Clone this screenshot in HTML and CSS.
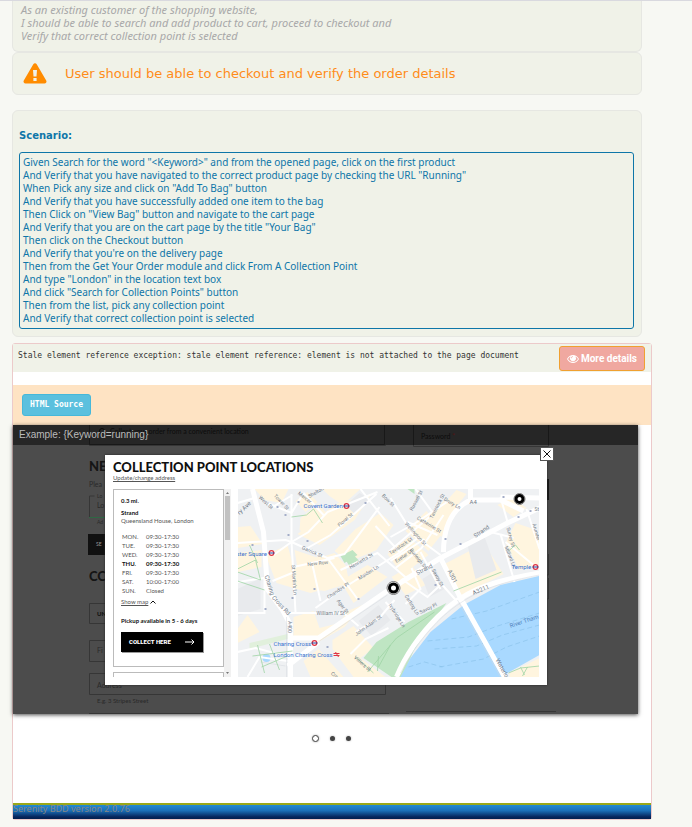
FILE: index.html
```html
<!DOCTYPE html>
<html lang="en">
<head>
<meta charset="utf-8">
<title>Serenity BDD report</title>
<link rel="stylesheet" href="styles.css">
</head>
<body>
<main class="report">
  <section class="card narrative">
    <p>As an existing customer of the shopping website,<br>I should be able to search and add product to cart, proceed to checkout and<br>Verify that correct collection point is selected</p>
  </section>

  <section class="card story">
    <svg class="story-icon" viewBox="0 0 24 21" aria-hidden="true">
      <path fill="#ff8c00" fill-rule="evenodd" d="M10.300 1.200a2 2 0 0 1 3.400 0l9.500 16.400a2 2 0 0 1-1.700 3H2.500a2 2 0 0 1-1.700-3zM10 7l.5 6.500h3L14 7zM10.400 15v3h3.200v-3z"/>
    </svg>
    <h1>User should be able to checkout and verify the order details</h1>
  </section>

  <section class="card scenario">
    <h2>Scenario:</h2>
    <div class="steps">
      <div>Given Search for the word "&lt;Keyword&gt;" and from the opened page, click on the first product</div>
      <div>And Verify that you have navigated to the correct product page by checking the URL "Running"</div>
      <div>When Pick any size and click on "Add To Bag" button</div>
      <div>And Verify that you have successfully added one item to the bag</div>
      <div>Then Click on "View Bag" button and navigate to the cart page</div>
      <div>And Verify that you are on the cart page by the title "Your Bag"</div>
      <div>Then click on the Checkout button</div>
      <div>And Verify that you're on the delivery page</div>
      <div>Then from the Get Your Order module and click From A Collection Point</div>
      <div>And type "London" in the location text box</div>
      <div>And click "Search for Collection Points" button</div>
      <div>Then from the list, pick any collection point</div>
      <div>And Verify that correct collection point is selected</div>
    </div>
  </section>

  <section class="result">
    <header class="error">
      <p>Stale element reference exception: stale element reference: element is not attached to the page document</p>
      <button type="button" class="details">
        <svg viewBox="0 0 12 8" aria-hidden="true"><path fill="#fff" fill-rule="evenodd" d="M0 4C1.500 1.300 3.600 0 6 0s4.500 1.300 6 4C10.500 6.700 8.400 8 6 8S1.500 6.700 0 4zM1 4c1 1.700 2.900 3 5 3s4-1.300 5-3C10.400 2.900 9.500 2 8.500 1.500a3 3 0 1 1-5 0C2.500 2 1.600 2.900 1 4zM6 1.300C4.900 1.300 4.200 2 4.200 3.200h.7C4.900 2.500 5.300 2 6 2z"/></svg>
        More details
      </button>
    </header>
    <div class="toolbar"><button type="button" class="source">HTML Source</button></div>

    <div class="stage">
      <svg class="backdrop" viewBox="0 0 625 289" aria-hidden="true">
        <rect width="625" height="289" fill="#4c4c4c"/>
        <g fill="none" stroke="#363636">
          <path d="M76.500 0v20.500h296V0M400.500 0v21.500h135V0M76.500 71h5M76.500 71v21M76.500 178.500v20h20M76.500 178.500h20M76.500 215.500h20M76.500 215.500v21h20M76.500 248.500v21h296v-10M76.500 248.500h20M393 286.500h150M76 288.500h300M535.500 54v21M535.500 129v21h-3M535.500 153v21h-3"/>
        </g>
        <path stroke="#2f6844" d="M76 92.500h20"/>
        <path fill="#111" d="M75 109h21v21H75z"/>
        <path fill="#181818" d="M534 54h2v21h-2z"/>
        <g font-family="Lato, sans-serif" font-size="7" fill="#292929">
          <text x="76" y="46" font-size="13" font-weight="900" fill="#151515">NE</text>
          <text x="76" y="156" font-size="13" font-weight="900" fill="#151515">CC</text>
          <text x="76" y="62">Plea</text><text x="84" y="73" font-size="5">Lo</text><text x="84" y="83">Lo</text>
          <text x="84" y="99" font-size="5">Ad</text><text x="83" y="121" font-size="5" fill="#999">SE</text>
          <text x="84" y="191" font-size="6" font-weight="900" fill="#111">UN</text><text x="84" y="228">Fi</text><text x="84" y="263">Address</text>
          <text x="84" y="278" font-size="6">E.g. 3 Stripes Street</text>
        </g>
      </svg>

      <div class="caption">
        <svg viewBox="0 0 625 20" aria-hidden="true">
          <rect width="625" height="20" fill="#262626"/>
          <path fill="none" stroke="#181818" d="M76.500 0v19.500h295V0M400.500 0v20M535.500 0v20"/>
          <circle cx="89" cy="6" r="2.500" fill="none" stroke="#0b0b0b"/>
          <g font-family="Lato, sans-serif" font-size="7" fill="#0c0c0c"><text x="97" y="9">Collect your order from a convenient location</text><text x="408" y="14">Password <tspan fill="#501414">*</tspan></text></g>
        </svg>
        <span>Example: {Keyword=running}</span>
      </div>

      <section class="modal">
        <button type="button" class="close" aria-label="Close"><svg viewBox="0 0 12 12"><path d="M2.500 2.500l7 7M9.500 2.500l-7 7" stroke="#111" fill="none"/></svg></button>
        <h3>COLLECTION POINT LOCATIONS</h3>
        <a class="address" href="#">Update/change address</a>
        <div class="columns">
          <div class="places">
            <article class="place">
              <b>0.3 mi.</b>
              <b class="name">Strand</b>
              <p>Queensland House, London</p>
              <table>
                <tr><th>MON.</th><td>09:30-17:30</td></tr>
                <tr><th>TUE.</th><td>09:30-17:30</td></tr>
                <tr><th>WED.</th><td>09:30-17:30</td></tr>
                <tr class="today"><th>THU.</th><td>09:30-17:30</td></tr>
                <tr><th>FRI.</th><td>09:30-17:30</td></tr>
                <tr><th>SAT.</th><td>10:00-17:00</td></tr>
                <tr><th>SUN.</th><td>Closed</td></tr>
              </table>
              <div class="showmap"><a href="#">Show map</a><svg viewBox="0 0 6 4" aria-hidden="true"><path d="M.5 3.500L3 1l2.500 2.500" fill="none" stroke="#111"/></svg></div>
              <b class="pickup">Pickup available in 5 - 6 days</b>
              <button type="button" class="collect">COLLECT HERE<svg viewBox="0 0 10 6" aria-hidden="true"><path d="M0 3h9M6.500.5L9 3 6.500 5.500" fill="none" stroke="#fff"/></svg></button>
            </article>
            <article class="place next"></article>
          </div>
          <svg class="scroll" viewBox="0 0 7 188" aria-hidden="true"><path fill="#f1f1f1" d="M0 0h7v188H0z"/><path fill="#c1c1c1" d="M1 7h5v44H1z"/><path fill="#777" d="M2 5l1.500-2L5 5zM2 183l1.500 2L5 183z"/></svg>
          <svg class="map" viewBox="0 0 302 188" preserveAspectRatio="xMidYMid slice" role="img" aria-label="Map of collection points">
            <rect width="302" height="188" fill="#eff1f3"/>
            <g fill="#fff5df">
              <path d="M17 0h34l-7 14-17-3zM0 38l13-1 12 18-25 4zM63 29l18-14 13 15-18 18-14-7zM85 0h38l-18 16-13-9zM58 12l12-9 10 10-12 10zM28 66l22-10 6 22 14-3 14-10 10 10 4 22-25 7-34-10zM57 61l24 8 16-5 11 12 4 18-25 8-24-4zM60 45l38-30 36-10-17 26-35 25zM97 62l21-22 25-16 13 12-17 25-28 12zM103 92l27-16 20 12-34 26zM56 128l20-6 6 17 20-5 8-12 15-6-18 22-26 15-25-6zM95 151l21-14 20 22-13 10 25 19h-32l-21-28zM66 172l15-12 25 28H73zM0 64l24-3v17l-24 5zM0 140l10-14 12 17-22 11z"/>
              <path d="M150 65l21-17 20 18-26 20zM168 42l21-20 17 21-15 19zM192 26l14-14 14 5-16 31zM207 75l25-13 16-5 18 28-43 22zM268 54l10-20 18 6 6 11v24l-20 6zM260 16l14-8 15 11-13 9zM154 88l20-12 14 20-20 10zM272 184l30-15v19h-30zM207 14l12-13 10 4-9 11z"/>
            </g>
            <path fill="#e8eaed" d="M229 52l17-7 13 36-21 9zM108 16l14-12 12 7-17 14zM121 132l20-16 12 15-19 16zM185 90l14-9 8 19-15 8zM0 100l23-11v31l-23 7z"/>
            <g fill="#bfe5c3"><path d="M126 169l13-16 32-20 38-19-18 25-15 23-11 26h-11zM103 67l12-6 5 5-13 8zM108 71l9-4 4 4-9 6zM170 0h7v5z"/><path d="M12 154l38-9v5l-38 10z" fill="#e1f0dc"/></g>
            <path fill="#a9d9ff" d="M163 188l10-19 20-26 33-27 37-20 39-9v79l-32 18-4 4z"/>
            <circle cx="29" cy="169" r="4" fill="#a9d9ff"/>
            <g fill="none" stroke="#87bfe8" stroke-width=".6" stroke-dasharray="5 3"><path d="M171 178l16-5 18 5M190 152l41-4 29-11 42-13M197 160l42-3 26-11 37-10M214 130l35-8 53-19M202 178l44-8 23-12 33-11"/></g>
            <g fill="none" stroke="#fff" stroke-width="2">
              <path d="M0 54l48-3 6 2 17-10 19-20 30-12 20-8M54 5v48l4 70M54 53l36 16 30 41M70 59l23-13 46-41M75 76l8 36M78 119l28-20 57-36 17-14M103 81l37-17 30 26M48 124h58l15 13M0 14l17-5M27 13l27 11 12-20M66 4l20 22M35 18l20-12M0 124h27V89L0 93M0 163l18-4 38 10M10 188l12-20 28 4M36 66l18-13M56 78l41-9M35 92l22-9M90 69l17-4 35-47M123 0l29 37M138 37l25 27M153 9l23 37 27 20M153 48l25-14 33-22M151 63l42-36M158 79l26-20 22-33M170 33l30 13M187 50l-34 22M164 90l26 18 14-13 16 18M174 79l9 21-15 15M183 63l20 37M178 0l16 22M148 113l19 20M118 143l24-14 15-18M113 165l15-15 23-11M270 33l-7-25M263 45l14 48M268 53l28 23M289 20l13 40M253 43l23 6"/>
            </g>
            <g fill="none" stroke="#fff" stroke-width="4" stroke-linejoin="round">
              <path d="M15 0l11 43 3 43v13l16 22 8 15v13h28l70-48 52-32 50-26 17-9 32-15M206 63c0-25 8-43 27-52h30l23 11M233 11V0M263 8l39 1" stroke-width="5"/>
              <path d="M159 188c10-24 23-42 41-60 24-24 48-35 102-44M203 69l20 40 44 79M53 149v39M50 177l31-24" stroke-width="5"/>
            </g>
            <g fill="none" stroke="#d5d9df" stroke-width=".5"><path d="M163 184c12-23 25-40 43-57 22-19 45-32 96-41M220 111l43 77M23 173l25 4M82 152l68-46M49 128v60"/></g>
            <g fill="none" stroke="#9ed4a4" stroke-width=".8"><path d="M0 80l18-9 5 20-23-8M12 56l8 18M0 92l27 9M54 28l15-2 7-6 9 14M20 156l7 28M15 167l40-5M32 155l10 26M24 178l26-11M130 183l29-34 38-26M141 167l-1 15M118 168l18 16M216 102l48-19M271 62l7-6 4 5M271 184l12-5 19-2M283 178l4 8M290 178l-5 9M153 156l-12 22"/></g>
            <g font-family="Roboto, sans-serif" font-size="5" fill="#737c88">
              <text x="2" y="26" font-size="6" transform="rotate(-43 2 26)">ry Ave</text><text x="21" y="9" transform="rotate(42 21 9)">West St</text><text x="36" y="7" transform="rotate(47 36 7)">Tower St</text><text x="60" y="5" transform="rotate(38 60 5)">Mercer</text><text x="72" y="9" transform="rotate(-30 72 9)">Shelton</text><text x="102" y="38" transform="rotate(-41 102 38)">Floral St</text><text x="144" y="7" transform="rotate(45 144 7)">Bow St</text><text x="64" y="60" transform="rotate(23 64 60)">Garrick St</text><text x="70" y="77" transform="rotate(-6 70 77)">New Row</text><text x="54" y="76" transform="rotate(86 54 76)">St Martin's Ln</text><text x="113" y="80" transform="rotate(-30 113 80)">Henrietta St</text><text x="122" y="91" transform="rotate(-32 122 91)">Maiden Ln</text><text x="91" y="110" transform="rotate(-34 91 110)">Chandos Pl</text><text x="99" y="112" transform="rotate(53 99 112)">Agar St</text><text x="79" y="126">William IV St</text><text x="27" y="87" font-size="6" transform="rotate(72 27 87)">Charing</text><text x="34" y="109" font-size="6" transform="rotate(47 34 109)">Cross Rd</text><text x="50" y="132" transform="rotate(90 50 132)">A400</text><text x="119" y="147" transform="rotate(-36 119 147)">John Adam St</text><text x="116" y="169" transform="rotate(41 116 169)">Villiers St</text><text x="93" y="185" transform="rotate(40 93 185)">Cra</text>
              <text x="153" y="66" transform="rotate(-34 153 66)">Tavistock St</text><text x="167" y="35" transform="rotate(48 167 35)">Wellington St</text><text x="179" y="30" transform="rotate(31 179 30)">Catherine St</text><text x="175" y="22" transform="rotate(-62 175 22)">Russell St</text><text x="195" y="30" transform="rotate(-63 195 30)">Tavistock St</text><text x="206" y="11" transform="rotate(31 206 11)">Drury Ln</text><text x="159" y="74" transform="rotate(-34 159 74)">Exeter St</text><text x="172" y="61" transform="rotate(52 172 61)">Burleigh St</text><text x="232" y="15" font-size="6">A4</text><text x="238" y="49" font-size="6" transform="rotate(-35 238 49)">Strand</text><text x="180" y="86" font-size="6" transform="rotate(-27 180 86)">Strand</text><text x="297" y="22">St</text><text x="269" y="39" transform="rotate(75 269 39)">Surrey St</text><text x="295" y="35" transform="rotate(75 295 35)">Arundel</text><text x="267" y="58" transform="rotate(68 267 58)">Milford Ln</text><text x="210" y="82" font-size="6" transform="rotate(63 210 82)">A301</text><text x="236" y="106" font-size="6" transform="rotate(-23 236 106)">A3211</text><text x="194" y="81" transform="rotate(61 194 81)">Savoy St</text><text x="183" y="125" transform="rotate(-26 183 125)">Savoy Pl</text><text x="167" y="107" transform="rotate(58 167 107)">Carting Ln</text><text x="151" y="116" transform="rotate(58 151 116)">Ivybridge Ln</text><text x="258" y="171" font-size="6" transform="rotate(61 258 171)">Waterlo</text>
            </g>
            <g font-family="Roboto, sans-serif" font-size="6" fill="#3972cf">
              <text x="66" y="19">Covent Garden</text><text x="-1" y="67">ster Square</text><text x="36" y="157">Charing Cross</text><text x="36" y="168">London Charing Cross</text><text x="274" y="80">Temple</text><text x="273" y="139" transform="rotate(-19 273 139)" fill="#5182bd">River Tham</text>
            </g>
            <g fill="#fff" stroke="#df3545" stroke-width="1.200"><circle cx="109" cy="17" r="2.300"/><circle cx="34" cy="64" r="2.300"/><circle cx="77" cy="154" r="2.300"/><circle cx="298" cy="78" r="2.300"/></g>
            <g stroke="#243c96"><path d="M106 17h6M31 64h6M74 154h6M295 78h6"/></g><path stroke="#df3545" d="M96 164.500h6M96 166.500h6M98 163l3 5"/>
            <g fill="#fff" stroke="#000" stroke-width="3"><circle cx="156" cy="99" r="6.500" stroke="#777" stroke-width="1"/><circle cx="156" cy="99" r="4"/><circle cx="282" cy="10" r="5.500" stroke="#777" stroke-width="1"/><circle cx="282" cy="10" r="3.500"/></g>
            <g fill="#a3adc8"><path d="M60 12h2v2h-2zM39 17h2v2h-2zM47 25h2v2h-2zM69 51h2v2h-2zM50 45h2v2h-2zM14 55h2v2h-2zM127 13h2v2h-2zM54 108h2v2h-2zM76 99h2v2h-2zM120 109h2v2h-2zM27 119h2v2h-2zM89 157h2v2h-2zM207 49h2v2h-2zM222 54h2v2h-2zM265 7h2v2h-2zM280 27h2v2h-2zM292 21h2v2h-2zM197 95h2v2h-2z"/></g>
          </svg>
        </div>
      </section>
    </div>

    <nav class="dots" aria-label="Screenshots">
      <button type="button" class="current" aria-label="Screenshot 1"></button>
      <button type="button" aria-label="Screenshot 2"></button>
      <button type="button" aria-label="Screenshot 3"></button>
    </nav>
    <footer>Serenity BDD version 2.0.76</footer>
  </section>
</main>
</body>
</html>
```

FILE: styles.css
```css
* { box-sizing: border-box; }
body {
  margin: 0;
  background: #f7f8f3;
  font-family: "Noto Sans", Verdana, sans-serif;
  font-size: 10px;
  line-height: 13px;
}
p, h1, h2, h3 { margin: 0; }
h1, h2 { font-family: "DejaVu Sans", Verdana, sans-serif; }
button { font: inherit; margin: 0; cursor: pointer; }
a { color: inherit; }

.report { border-top: 1px solid #d9d9df; padding: 0 40px 8px 12px; }
.card {
  margin-right: 10px;
  background: #f0f2e8;
  border: 1px solid #e6e7e2;
  border-radius: 6px;
}
.narrative {
  border-top: 0;
  border-radius: 0 0 6px 6px;
  padding: 2px 8px 9px;
  color: #a8a8a8;
  font-size: 11px;
  font-style: italic;
}
.story {
  display: flex;
  align-items: center;
  gap: 18px;
  height: 43px;
  padding: 0 10px;
}
.story-icon { width: 24px; height: 21px; }
.story h1 { font-size: 13px; font-weight: 400; line-height: 16px; color: #ff8c1a; }

.scenario { margin-top: 15px; padding: 18px 7px 7px 6px; color: #0e76a8; }
.scenario h2 { font-size: 10px; line-height: 13px; margin-bottom: 10px; }
.steps { border: 1px solid #0e76a8; border-radius: 3px; padding: 3px; }

.result { margin-top: 6px; background: #fff; border: 1px solid #eccaca; border-radius: 3px; }
.error {
  display: flex;
  align-items: flex-start;
  justify-content: space-between;
  background: #f0f2e8;
  padding: 2px 6px 1px 5px;
}
.error p { font: 8px/13px "DejaVu Sans Mono", monospace; color: #333; padding-top: 3px; }
.details {
  display: flex;
  align-items: center;
  gap: 2px;
  height: 25px;
  padding: 0 7px;
  border: 1px solid #f0a030;
  border-radius: 3px;
  background: #f0a8a0;
  color: #fff;
  font: 700 10px/14px Roboto, Arial, sans-serif;
  white-space: nowrap;
}
.details svg { width: 12px; height: 8px; }
.toolbar { margin-top: 13px; padding: 9px; background: #fee3c3; }
.source {
  display: block;
  height: 22px;
  padding: 0 7px;
  border: 1px solid #46b8da;
  border-radius: 3px;
  background: #5bc0de;
  color: #fff;
  font: 700 8px/12px "DejaVu Sans Mono", monospace;
}

.stage { position: relative; margin-right: 13px; box-shadow: 0 1px 4px rgba(0, 0, 0, .7); }
.backdrop, .caption svg { display: block; width: 100%; }
.caption { position: absolute; top: 0; left: 0; right: 0; color: #bbb; font: 10px/20px "Liberation Sans", Arial, sans-serif; }
.caption span { position: absolute; left: 6px; top: 0; }

.modal {
  position: absolute;
  left: 92px;
  right: 91px;
  top: 30px;
  padding: 5px 8px 8px;
  background: #fff;
  font: 6px/8px Lato, sans-serif;
  color: #555;
  box-shadow: 0 0 2px #222;
}
.modal h3 { font: 900 13px/14px Lato, sans-serif; color: #111; }
.address { display: block; line-height: 7px; }
.close { position: absolute; right: -7px; top: -8px; width: 14px; height: 14px; padding: 0; border: 1px solid #555; background: #fff; }
.close svg { display: block; width: 12px; height: 12px; }
.columns { display: flex; margin-top: 8px; height: 188px; }
.places { flex: 0 0 111px; overflow: hidden; }
.place { height: 178px; padding: 7px; border: 1px solid #bbb; }
.place.next { margin-top: 5px; }
.place b { display: block; color: #111; }
.place .name { margin-top: 4px; }
.place table { margin-top: 7px; border-spacing: 0; line-height: 9px; }
.place th { width: 25px; padding: 0 0 0 1px; text-align: left; font-weight: 400; }
.place td { padding: 0; }
.place .today th, .place .today td { font-weight: 700; color: #111; }
.showmap { display: flex; align-items: center; gap: 2px; margin-top: 3px; }
.showmap svg { width: 6px; height: 4px; }
.place .pickup { margin-top: 11px; }
.collect {
  display: flex;
  align-items: center;
  justify-content: space-between;
  width: 82px;
  height: 20px;
  margin-top: 7px;
  padding: 0 8px;
  border: 0;
  background: #000;
  color: #fff;
  box-shadow: 1px 1px 0 #999;
  font: 900 6px/8px Roboto, sans-serif;
}
.collect svg { width: 10px; height: 6px; }
.scroll { width: 7px; flex: none; }
.map { flex: 1; min-width: 0; height: 188px; margin-left: 7px; }

.dots { display: flex; justify-content: center; align-items: center; gap: 11px; padding: 21px 0 0; margin-right: 2px; }
.dots button { width: 5px; height: 5px; padding: 0; border: 0; border-radius: 50%; background: #444; box-shadow: 0 0 2px #aaa; }
.dots .current { width: 7px; height: 7px; border: 1px solid #444; background: #fff; }
footer {
  height: 16px;
  margin-top: 61px;
  border-top: 2px solid #9aa818;
  background: linear-gradient(#238bd2, #1b70b8 40%, #06255c 85%, #03204f);
  color: #858585;
  font-size: 9px;
  line-height: 8px;
}
```
